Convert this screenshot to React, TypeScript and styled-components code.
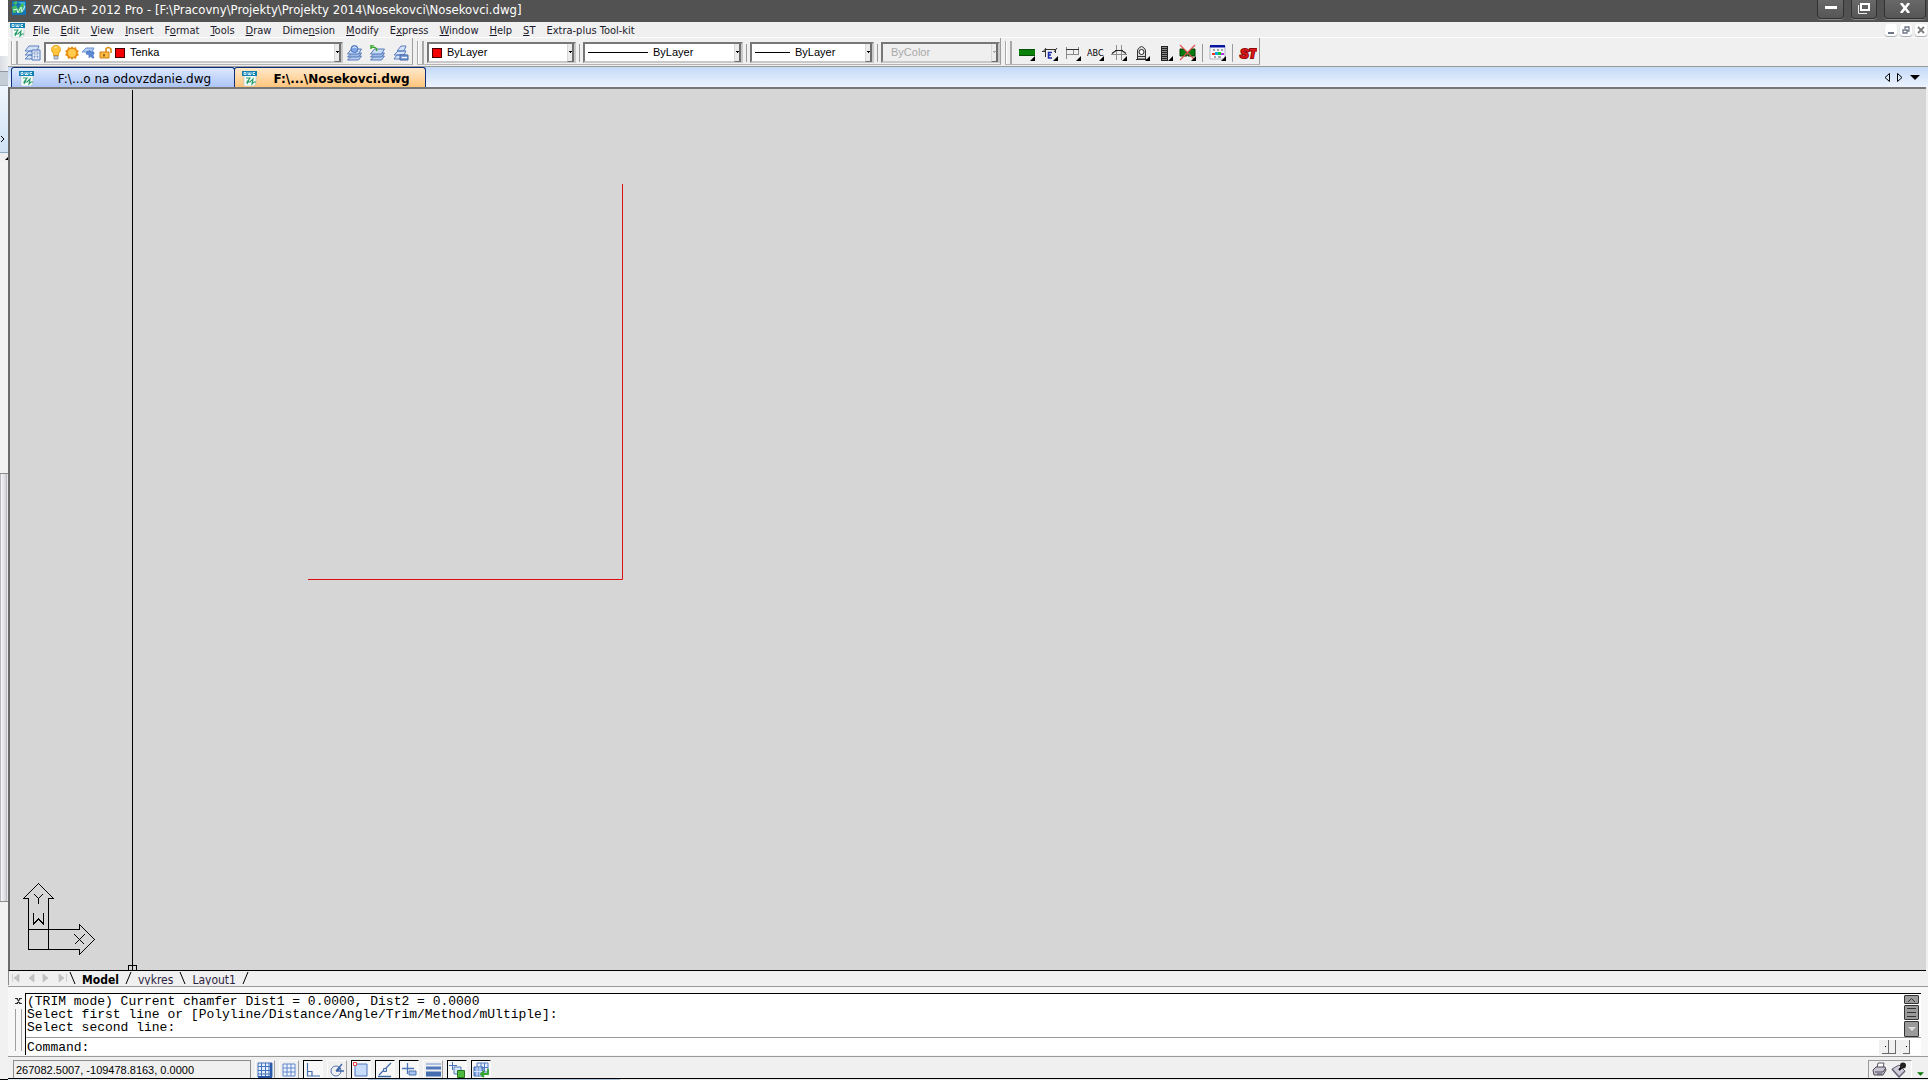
import React from "react";
import styled, { createGlobalStyle, css } from "styled-components";

const GlobalStyle = createGlobalStyle`
  * { box-sizing: border-box; }
  html, body { margin: 0; padding: 0; overflow: hidden; }
  body { background: #efefef; color: #000; font-family: "Liberation Sans", Arial, sans-serif; font-size: 11px; }
  button { font: inherit; color: inherit; padding: 0; margin: 0; border: 0; background: none; }
  svg { display: block; flex: none; }
`;

/* ---------- frame ---------- */

const Screen = styled.div`
  display: flex;
  height: 100vh;
`;

const Behind = styled.aside`
  display: flex;
  flex-direction: column;
  flex: none;
  width: 8px;
  background: #f0f0f0;
`;

const BehindPart = styled.div<{ $h?: number; $bg: string; $line?: string }>`
  display: flex;
  align-items: flex-end;
  ${(p) => (p.$h ? `height: ${p.$h}px; flex: none;` : "flex: 1;")}
  background: ${(p) => p.$bg};
  border-bottom: 1px solid ${(p) => p.$line || "transparent"};
`;

const AppWindow = styled.div`
  display: flex;
  flex-direction: column;
  flex: 1;
  min-width: 0;
`;

/* ---------- title ---------- */

const TitleBar = styled.header`
  display: flex;
  align-items: flex-start;
  flex: none;
  height: 22px;
  padding: 0 2px 0 2px;
  background: #525252;
  color: #fff;
`;

const Title = styled.h1`
  flex: 1;
  margin: 0 0 0 7px;
  font: 400 13px/19px "DejaVu Sans Condensed", "DejaVu Sans", sans-serif;
  font-stretch: condensed;
  white-space: pre;
`;

const WinButtons = styled.div`
  display: flex;
  gap: 7px;
`;

const WinButton = styled.button<{ $w: number }>`
  display: flex;
  justify-content: center;
  align-items: center;
  width: ${(p) => p.$w}px;
  height: 19px;
  padding-bottom: 2px;
  border: 1px solid #323232;
  border-top: 0;
  border-radius: 0 0 4px 4px;
  background: linear-gradient(#686868, #565656);
  box-shadow: 0 1px 0 #858585;
`;

/* ---------- menu ---------- */

const MenuBar = styled.nav`
  display: flex;
  align-items: center;
  flex: none;
  height: 16px;
  padding: 1px 1px 0 2px;
  border-bottom: 1px solid #fff;
  background: #f0f0f0;
`;

const Menus = styled.div`
  display: flex;
  flex: 1;
  gap: 11px;
  margin-left: 7px;
`;

const MenuButton = styled.button`
  height: 14px;
  font: 11px/15px "DejaVu Sans Condensed", "DejaVu Sans", sans-serif;
  font-stretch: condensed;
  color: #1c1a2c;
  white-space: pre;
`;

const DocButtons = styled.div`
  display: flex;
  gap: 3px;
`;

const DocButton = styled.button`
  display: flex;
  align-items: center;
  justify-content: center;
  width: 12px;
  height: 12px;
  border-radius: 3px;
  background: #fff;
  box-shadow: 0 1px 1px #a5a9b0;
`;

/* ---------- toolbar ---------- */

const Toolbars = styled.div`
  display: flex;
  flex: none;
  height: 29px;
  padding-left: 3px;
  border-bottom: 1px solid #9a9a9a;
  background: #f0f0f0;
`;

const Toolbar = styled.div`
  display: flex;
  align-items: center;
  height: 27px;
  margin-right: 4px;
  padding-top: 3px;
  border-right: 1px solid #9c9c9c;
  border-bottom: 1px solid #b4b4b4;
`;

const Grip = styled.span`
  width: 7px;
  height: 23px;
  margin-right: 3px;
  border-left: 1px solid #a8a8a8;
  border-right: 1px solid #a8a8a8;
  background: linear-gradient(90deg, #fff 1px, #f0f0f0 1px, #f0f0f0 4px, #a8a8a8 4px);
`;

const ToolButton = styled.button`
  display: flex;
  align-items: center;
  justify-content: center;
  width: 23px;
  height: 23px;
`;

const Divider = styled.span`
  width: 1px;
  height: 18px;
  margin: 0 3px;
  background: #9a9a9a;
`;

const ComboBox = styled.div<{ $w: number; $off?: boolean }>`
  display: flex;
  align-items: center;
  width: ${(p) => p.$w}px;
  height: 21px;
  padding: 0 0 0 3px;
  border: 2px solid;
  border-color: #777 #c9c9c9 #c9c9c9 #777;
  background: ${(p) => (p.$off ? "#efefef" : "#fff")};
`;

const ComboIcons = styled.span`
  display: flex;
  align-items: center;
  gap: 2px;
`;

const ComboSelect = styled.select`
  flex: 1;
  min-width: 0;
  height: 17px;
  padding: 0 0 0 5px;
  border: 0;
  background: transparent;
  color: #000;
  font: 11px/17px "Liberation Sans", Arial, sans-serif;
  appearance: none;
  &:disabled { color: #a9a9a9; opacity: 1; }
`;

const ComboArrow = styled.span<{ $off?: boolean }>`
  display: flex;
  align-items: center;
  justify-content: center;
  width: 7px;
  height: 18px;
  border-right: 2px solid #6e6e6e;
  border-bottom: 1px solid #6e6e6e;
  border-left: 1px solid #d8d8d8;
  background: #ececec;
  color: ${(p) => (p.$off ? "#a9a9a9" : "#000")};
`;

const Swatch = styled.span`
  width: 10px;
  height: 10px;
  border: 1px solid #400;
  background: #f40000;
`;

const LineSample = styled.span<{ $w: number }>`
  width: ${(p) => p.$w}px;
  height: 1px;
  background: #000;
`;

/* ---------- document tabs ---------- */

const TabStrip = styled.div`
  display: flex;
  flex: none;
  align-items: flex-end;
  height: 20px;
  padding: 0 8px 0 3px;
  background: linear-gradient(#c3daf8, #edf3fe);
`;

const DocTab = styled.button<{ $on?: boolean; $w: number }>`
  display: flex;
  align-items: center;
  gap: 6px;
  width: ${(p) => p.$w}px;
  height: 20px;
  padding: 2px 6px 0 7px;
  border: 1px solid #0d2f78;
  border-bottom: 0;
  border-radius: 3px 3px 0 0;
  font: 12px/18px "DejaVu Sans", sans-serif;
  background: linear-gradient(#dce8fd, #adc5f6);
  ${(p) =>
    p.$on &&
    css`
      margin-left: -1px;
      font-weight: 700;
      background: linear-gradient(#ffe9cb, #ffc57c);
    `}
`;

const TabText = styled.span`
  flex: 1;
  text-align: center;
  white-space: pre;
`;

const TabNav = styled.div`
  display: flex;
  align-items: center;
  gap: 7px;
  height: 20px;
  margin-left: auto;
`;

/* ---------- drawing area ---------- */

const Canvas = styled.main`
  position: relative;
  flex: 1;
  min-height: 0;
  margin-right: 2px;
  border-top: 2px solid #777;
  border-left: 2px solid #6a6a6a;
  border-bottom: 1px solid #000;
  background: #d6d6d6;
  overflow: hidden;
`;

const Geometry = styled.svg`
  position: absolute;
  inset: 0;
  width: 100%;
  height: 100%;
`;

const UcsIcon = styled.svg`
  position: absolute;
  left: 12px;
  bottom: 14px;
`;

const Crosshair = styled.div`
  position: absolute;
  left: 122px;
  top: 1px;
  bottom: 0;
  width: 1px;
  background: #000;
`;

const PickBox = styled.div`
  position: absolute;
  left: 118px;
  bottom: -1px;
  width: 9px;
  height: 6px;
  border: 1px solid #000;
`;

/* ---------- layout tabs ---------- */

const LayoutTabs = styled.div`
  display: flex;
  flex: none;
  align-items: flex-start;
  height: 14px;
  padding-left: 3px;
  border-left: 1px solid #8a8a8a;
  background: #f0f0f0;
  overflow: hidden;
`;

const LayoutNav = styled.div`
  display: flex;
  align-items: center;
  width: 57px;
  height: 14px;
`;

const LayoutTab = styled.button<{ $on?: boolean }>`
  height: 18px;
  padding: 0 6px;
  font: ${(p) => (p.$on ? 700 : 400)} 12px/18px "DejaVu Sans Condensed", "DejaVu Sans", sans-serif;
  font-stretch: condensed;
  color: ${(p) => (p.$on ? "#000" : "#2c2440")};
`;

/* ---------- command window ---------- */

const CommandDock = styled.section`
  display: flex;
  flex: none;
  height: 71px;
  margin-top: 1px;
  padding: 6px 7px 0 5px;
  border-top: 1px solid #9a9a9a;
  border-bottom: 1px solid #9a9a9a;
  background: #f7f7f7;
`;

const DockHandle = styled.div`
  display: flex;
  flex-direction: column;
  align-items: center;
  gap: 5px;
  width: 12px;
  padding: 5px 2px 0 0;
`;

const DockGrip = styled.span`
  width: 7px;
  height: 42px;
  border-left: 1px solid #a0a0a0;
  border-right: 1px solid #a0a0a0;
`;

const CommandBox = styled.div`
  display: flex;
  flex-direction: column;
  flex: 1;
  height: 62px;
  border-top: 1px solid #000;
  border-left: 1px solid #000;
  background: #fff;
  font: 13px/13px "Liberation Mono", "Courier New", monospace;
`;

const History = styled.div`
  display: flex;
  justify-content: space-between;
  height: 45px;
  padding: 1px 2px 0 1px;
  border-bottom: 1px solid #9a9a9a;
`;

const Log = styled.div`
  white-space: pre;
`;

const ScrollColumn = styled.div`
  display: flex;
  flex-direction: column;
  gap: 1px;
`;

const ScrollPiece = styled.button<{ $h: number }>`
  display: flex;
  align-items: center;
  justify-content: center;
  width: 15px;
  height: ${(p) => p.$h}px;
  border: 1px solid #333;
  border-radius: 1px;
  background: #9b9b9b;
`;

const Prompt = styled.div`
  display: flex;
  align-items: center;
  flex: 1;
  padding: 2px 11px 0 1px;
`;

const PromptInput = styled.input`
  flex: 1;
  height: 14px;
  padding: 0 0 0 4px;
  border: 0;
  outline: 0;
  background: transparent;
  font: inherit;
`;

const SideScroll = styled.div`
  display: flex;
  height: 15px;
  padding-left: 3px;
  background: #f0f0f0;
`;

const SideButton = styled.button`
  display: flex;
  align-items: center;
  justify-content: center;
  width: 7px;
  height: 14px;
  border-right: 1px solid #6a6a6a;
  border-bottom: 1px solid #6a6a6a;
`;

const SideTrack = styled.span`
  width: 7px;
`;

/* ---------- status bar ---------- */

const StatusBar = styled.footer`
  display: flex;
  flex: none;
  align-items: flex-start;
  height: 22px;
  padding: 3px 0 0 5px;
  border-bottom: 1px solid #000;
  background: #f0f0f0;
`;

const Coordinates = styled.output`
  width: 238px;
  height: 18px;
  margin-right: 4px;
  padding-left: 2px;
  border: 1px solid #8c8c8c;
  border-bottom: 0;
  font-size: 11px;
  line-height: 18px;
`;

const Toggles = styled.div`
  display: flex;
  gap: 4px;
`;

const Toggle = styled.button<{ $down?: boolean }>`
  display: flex;
  align-items: center;
  justify-content: center;
  width: 20px;
  height: 18px;
  border: 1px solid;
  border-bottom: 0;
  border-color: ${(p) => (p.$down ? "#000 #fafafa #000 #000" : "#fafafa #a0a0a0 #fafafa #fafafa")};
  background: ${(p) => (p.$down ? "#f8f8f8" : "#f0f0f0")};
`;

const Tray = styled.div`
  display: flex;
  align-items: center;
  gap: 4px;
  width: 44px;
  height: 18px;
  margin-left: auto;
  padding: 0 3px;
  border: 1px solid #999;
  border-right-color: #fff;
  border-bottom: 0;
`;

const TrayArrow = styled.button`
  align-self: flex-end;
  width: 16px;
  padding: 0 0 2px 5px;
`;

const Taskbar = styled.div`
  flex: none;
  height: 1px;
  background: linear-gradient(90deg, #dfe9f4 0 60px, #f4f4f4 60px 360px, #a9c2d8 360px 612px, #e8eaee 612px);
`;

/* ---------- icons ---------- */

const AppLogo = () => (
  <svg width="16" height="16" viewBox="0 0 16 16">
    <rect x="2" y="1" width="14" height="14" fill="#1674b4" />
    <path d="M8 2h7v9L12 5Z" fill="#3cb2e4" />
    <path d="M3 3l3-2 2 2-3 2ZM2 7l4-2 2 4 4-6 2 1-2 9h-3l-1-3-3 3H3Z" fill="#43ba63" />
    <path d="M3 10l4-1 1 4 3-6 1 5 3-6" fill="none" stroke="#d3f7ea" />
  </svg>
);

const DwgIcon = () => (
  <svg width="16" height="15" viewBox="0 0 16 15">
    <path d="M2 3h12v9l-2 3H2Z" fill="#f8fdfb" stroke="#a7bfc6" strokeWidth=".6" />
    <rect x="0" y="0" width="15" height="5" fill="#1280b4" />
    <path d="M2 1.500h2v2H2zM6 1v2.500h1.500V1.500M7.500 3.500H9V1M13 1.500h-2v2h2" fill="none" stroke="#e9faff" strokeWidth=".9" />
    <path d="M4 7h4l-3 4h3l3-3-1 5 2-2h2M5 13l2-4" fill="none" stroke="#2f9e6d" strokeWidth="1.200" />
  </svg>
);

const Sheets = () => (
  <g stroke="#4a6eae" strokeWidth=".9">
    <path d="M1 15l4-4h10l-3 4Z" fill="#b9d0f3" />
    <path d="M1 12l4-4h10l-3 4Z" fill="#9dbcec" />
    <path d="M1 9l4-5h10l-3 5Z" fill="#c8dbf8" />
  </g>
);

const LayerManagerIcon = () => (
  <svg width="17" height="16" viewBox="0 0 17 16">
    <path d="M1 6l4-5h10l-2 5ZM1 10l4-4h8l-2 4ZM1 14l4-4h8l-2 4Z" fill="#d3e1f7" stroke="#5c80bf" />
    <path d="M8 5h8v10H8Z" fill="#e3ebfa" stroke="#5376b5" />
    <path d="M10 7h4v2h-4zM10 11h1v1h-1zM13 11h1v1h-1zM10 13h1M13 13h1" fill="#fff" stroke="#6485bd" strokeWidth=".7" />
  </svg>
);

const LayerCurrentIcon = () => (
  <svg width="17" height="16" viewBox="0 0 16 16">
    <Sheets />
    <circle cx="8" cy="4" r="3.500" fill="#7fa5e4" stroke="#4f78bc" />
    <path d="M6 3q2-2 4 0" stroke="#e6f0ff" fill="none" />
  </svg>
);

const LayerPreviousIcon = () => (
  <svg width="17" height="16" viewBox="0 0 16 16">
    <Sheets />
    <path d="M7 6Q8 2 2 2M4.500 0H1.500v4" fill="none" stroke="#35a92e" strokeWidth="1.500" />
  </svg>
);

const LayerStatesIcon = () => (
  <svg width="16" height="16" viewBox="0 0 16 16">
    <path d="M1 14l3-4h9l-2 4ZM1 10l4-4h8l-2 4ZM4 6l4-5h5l-2 5Z" fill="#d5e3fa" stroke="#5a7fbe" />
    <path d="M7 10h8v5H7z" fill="#7fa2dc" stroke="#41659f" />
    <path d="M9 12.500h5" stroke="#fff" />
  </svg>
);

const BulbIcon = () => (
  <svg width="14" height="15" viewBox="0 0 14 15">
    <path d="M7 0.500c5 0 5.500 5 2.500 8v2h-5v-2C1.500 5.500 2 .5 7 .5Z" fill="#ffc63c" stroke="#e59a12" />
    <path d="M5 3q1-1 3-1" stroke="#fff4c4" fill="none" />
    <path d="M5 11h4v3H5z" fill="#c9d2e0" stroke="#6d7890" strokeWidth=".7" />
  </svg>
);

const SunIcon = () => (
  <svg width="14" height="14" viewBox="0 0 14 14">
    <path d="M7 0l1.500 2L11 1l.5 2.500L14 5l-1.500 2L14 9l-2.500 1.500L11 13l-2.500-1L7 14l-1.500-2L3 13l-.5-2.500L0 9l1.500-2L0 5l2.500-1.500L3 1l2.500 1Z" fill="#e98d13" />
    <circle cx="7" cy="7" r="4" fill="#ffcc4d" />
  </svg>
);

const FreezeIcon = () => (
  <svg width="14" height="14" viewBox="0 0 14 14">
    <path d="M5 2h8l-2 4H1Z" fill="#b4cdf5" stroke="#6a8fd2" />
    <path d="M6 5l1 1 1.500-2L10 6h3v2l-1 1 1 3h-2l-1-2-2 2V9L5 8Z" fill="#5c86d6" stroke="#4c74b9" strokeWidth=".6" />
  </svg>
);

const LockIcon = () => (
  <svg width="14" height="14" viewBox="0 0 14 14">
    <path d="M7 6V3q2-3 5 0v4" fill="none" stroke="#d98a12" strokeWidth="1.600" />
    <path d="M1 6h9v6H1z" fill="#ffbd45" stroke="#cf7f10" />
    <path d="M5 8v2.500" stroke="#7b4a08" strokeWidth="1.500" />
  </svg>
);

const Corner = () => <path d="M17 12v5h-5Z" fill="#000" />;

const steelIcons: Record<string, React.ReactNode> = {
  "Green beam": (
    <>
      <path d="M1 5h16v7H1z" fill="#0a820a" />
      <path d="M1 5.500h16M1 11.500h16" stroke="#075007" />
    </>
  ),
  "Edit reinforcement": (
    <>
      <path d="M5 5.500h10M4.500 5v8M1 7.500h3M14.500 5v4M2 8l3-4M13 8l3-4" stroke="#333" fill="none" />
      <path d="M11 8.500H7.500V14H11M7.500 11H10" stroke="#1a2cae" fill="none" strokeWidth="1.500" />
    </>
  ),
  Dimensions: (
    <>
      <path d="M2.500 3v12M14.500 3v8M9.500 5v6M2 10.500h13" stroke="#8a8a8a" fill="none" />
      <path d="M2 5.500h13" stroke="#333" />
    </>
  ),
  Grid: (
    <>
      <path d="M6.500 1v15M11.500 1v15M1 10.500h16" stroke="#8c8c8c" />
      <path d="M2 9.500l4-3h6l4 3M5 6.500h8" stroke="#222" fill="none" strokeWidth="1.200" />
    </>
  ),
  Section: (
    <>
      <path d="M4.500 15V6q4-7 8 0v9Z" fill="#ddd" stroke="#333" />
      <circle cx="8.500" cy="8" r="2.500" fill="#fff" stroke="#222" />
      <path d="M4 12.500h9M3 15.500h11" stroke="#333" />
    </>
  ),
  Column: (
    <>
      <path d="M5 2h7v15H5z" fill="#8b8b8b" />
      <path d="M5 2.500h7M5 4.500h7M5 6.500h7M5 8.500h7M5 10.500h7M5 12.500h7M5 14.500h7M5 16.500h7M5.500 2v15M11.500 2v15" stroke="#222" />
    </>
  ),
  "Delete beam": (
    <>
      <path d="M1 5h4l3 3v4H1zM16 5h-4l-3 3v4h7z" fill="#067c10" stroke="#063c06" />
      <path d="M1 1l15 15M16 1L1 16" stroke="#e05050" strokeWidth="1.200" />
    </>
  ),
  "Color table": (
    <>
      <path d="M1 2h15v13H1z" fill="#f8f8ff" stroke="#b5b5c5" />
      <path d="M1 1h15v2.500H1z" fill="#0a169e" />
      <path d="M4 6h2M8 6h2M12 6h2M5 13h2M9 13h3" stroke="#555" />
      <path d="M3 9h3v2H3z" fill="#f0341c" />
      <path d="M6 8h3v3H6z" fill="#14a7e8" />
      <path d="M9 8h3v3H9z" fill="#10c82c" />
      <path d="M12 9h3v2h-3z" fill="#b034e0" />
    </>
  ),
};

const SteelIcon = ({ name }: { name: string }) => (
  <svg width="18" height="18" viewBox="0 0 18 18">
    {steelIcons[name]}
    <Corner />
  </svg>
);

const AbcIcon = () => (
  <svg width="18" height="18" viewBox="0 0 18 18">
    <text x="0" y="12" fontFamily="DejaVu Sans Condensed, DejaVu Sans, sans-serif" fontSize="9" fontStretch="condensed" fill="#000">ABC</text>
    <Corner />
  </svg>
);

const StLogo = () => (
  <svg width="18" height="16" viewBox="0 0 18 16">
    <text
      x="1"
      y="13"
      fontFamily="Liberation Sans, sans-serif"
      fontSize="13"
      fontWeight="700"
      fontStyle="italic"
      fill="#e01818"
      stroke="#8c0a0a"
      strokeWidth="2"
      paintOrder="stroke"
    >
      ST
    </text>
  </svg>
);

const blue = "#4472bd";
const statusIcons: Record<string, React.ReactNode> = {
  Snap: (
    <>
      <path d="M1 1h14v14H1z" fill="#e4efff" stroke={blue} />
      <path d="M4.500 1v13M8.500 1v13M12 1v13M1 4.500h13M1 8.500h13M1 12h13" stroke={blue} />
      <path d="M14 1v14H1" stroke="#2c59a8" strokeWidth="2" fill="none" />
    </>
  ),
  Grid: <path d="M2 2h12v12H2zM6 2v12M10 2v12M2 6h12M2 10h12" fill="#eff5ff" stroke="#6086c8" />,
  Ortho: <path d="M2.500 1v13H15M3 9.500h4V14" fill="none" stroke="#466fae" strokeWidth="1.200" />,
  Polar: (
    <>
      <circle cx="7" cy="9" r="5" fill="none" stroke="#5378b3" />
      <path d="M7 9h8M7 9l6-7M7 9l5-3" stroke="#3c64a8" strokeWidth="1.300" />
    </>
  ),
  "Object snap": (
    <>
      <path d="M2 2h12v12H2z" fill="#c7dbfb" stroke="#5076be" />
      <path d="M.5 .5h3v3h-3z" fill="#fff" stroke="#e34040" />
    </>
  ),
  "Object tracking": (
    <>
      <path d="M1 14.500h13M2 13L14 1" stroke="#446ca9" strokeWidth="1.300" />
      <path d="M6.500 6.500h3v3h-3z" fill="#cfe0fa" stroke="#446ca9" />
    </>
  ),
  "Dynamic input": (
    <>
      <path d="M6.500 1v11M1 6.500h12" stroke="#4b74b8" strokeWidth="1.300" />
      <path d="M8 9h7v4H8z" fill="#a9c4ee" stroke="#4d74b2" />
    </>
  ),
  Lineweight: (
    <>
      <path d="M1 2h15" stroke="#6c91cb" />
      <path d="M1 6h15" stroke="#4f77b9" strokeWidth="3" />
      <path d="M1 12h15" stroke="#456eb1" strokeWidth="5" />
    </>
  ),
  "Cycle select": (
    <>
      <path d="M3.500 0v8M0 3.500h8" stroke="#4b74b8" />
      <path d="M5 5h7v7H5z" fill="#d8e7fb" stroke="#527abb" />
      <path d="M8.500 8.500h7v7h-7z" fill="#4cb83e" stroke="#23751d" />
    </>
  ),
  "Model space": (
    <>
      <path d="M4 1h11v9H4zM8 1v9M11.500 1v9M4 5.500h11" fill="#e3edff" stroke="#537bbf" />
      <path d="M1 5h9v9H1z" fill="#7ea4e2" stroke="#3c65a8" />
      <path d="M4 5v9M7 5v9M1 9.500h9" stroke="#dce8ff" />
      <path d="M15 7v5H9M11 9l-3 3 3 3" fill="none" stroke="#34a62c" strokeWidth="1.800" />
    </>
  ),
};

const DownTriangle = ({ size, color = "currentColor" }: { size: number; color?: string }) => (
  <svg width={size} height={Math.ceil(size / 2)} viewBox="0 0 10 5">
    <path d="M0 0h10L5 5Z" fill={color} />
  </svg>
);

/* ---------- parts ---------- */

type ComboProps = {
  id: string;
  label: string;
  value: string;
  width: number;
  disabled?: boolean;
  children?: React.ReactNode;
};

const Combo = ({ id, label, value, width, disabled, children }: ComboProps) => (
  <ComboBox $w={width} $off={disabled}>
    <ComboIcons>{children}</ComboIcons>
    <ComboSelect id={id} aria-label={label} disabled={disabled} defaultValue={value}>
      <option>{value}</option>
    </ComboSelect>
    <ComboArrow $off={disabled}>
      <svg width="3" height="2" viewBox="0 0 3 2">
        <path d="M0 0h3v1H2v1H1V1H0Z" fill="currentColor" />
      </svg>
    </ComboArrow>
  </ComboBox>
);

/* label and position of the underlined access key */
const menus: [string, number][] = [
  ["File", 0],
  ["Edit", 0],
  ["View", 0],
  ["Insert", 0],
  ["Format", 1],
  ["Tools", 0],
  ["Draw", 0],
  ["Dimension", 4],
  ["Modify", 0],
  ["Express", 1],
  ["Window", 0],
  ["Help", 0],
  ["ST", 0],
  ["Extra-plus Tool-kit", -1],
];

const toggles: [string, boolean][] = [
  ["Snap", false],
  ["Grid", false],
  ["Ortho", true],
  ["Polar", false],
  ["Object snap", true],
  ["Object tracking", true],
  ["Dynamic input", true],
  ["Lineweight", false],
  ["Cycle select", true],
  ["Model space", true],
];

const MenuLabel = ({ text, mark }: { text: string; mark: number }) =>
  mark < 0 ? (
    <>{text}</>
  ) : (
    <>
      {text.slice(0, mark)}
      <u>{text[mark]}</u>
      {text.slice(mark + 1)}
    </>
  );

const Slash = ({ back }: { back?: boolean }) => (
  <svg width="7" height="14" viewBox="0 0 7 14">
    <path d={back ? "M1 1L6 13" : "M6 1L1 13"} stroke="#000" fill="none" />
  </svg>
);

export default function App() {
  return (
    <>
      <GlobalStyle />
      <Screen>
        <Behind aria-hidden="true">
          <BehindPart $h={56} $bg="#fff" />
          <BehindPart $h={16} $bg="linear-gradient(90deg,#d9dde3,#eceef1)" $line="#8e969f" />
          <BehindPart $h={14} $bg="#c4ccd5" $line="#a5b4c4" />
          <BehindPart $h={67} $bg="linear-gradient(#f0f6fd,#cfe1f5)" $line="#8fa8c4">
            <svg width="6" height="17" viewBox="0 0 6 17">
              <path d="M1 1l3 3-3 3" fill="none" stroke="#000" />
            </svg>
          </BehindPart>
          <BehindPart $h={9} $bg="#efefef">
            <svg width="8" height="4" viewBox="0 0 8 4">
              <path d="M5 3l3-3v3Z" fill="#000" />
            </svg>
          </BehindPart>
          <BehindPart $h={312} $bg="#f1f1f1" $line="#8c8c8c" />
          <BehindPart $h={428} $bg="linear-gradient(90deg,#b9b9c0 1px,#f7f7f9 1px,#d3d3da 6px,#a3a3aa 7px,#e8e8e8 7px)" $line="#8c8c8c" />
          <BehindPart $bg="#f1f1f1" $line="#000" />
        </Behind>

        <AppWindow>
          <TitleBar>
            <AppLogo />
            <Title>ZWCAD+ 2012 Pro - [F:\Pracovny\Projekty\Projekty 2014\Nosekovci\Nosekovci.dwg]</Title>
            <WinButtons>
              <WinButton $w={27} aria-label="Minimize">
                <svg width="12" height="4"><path d="M0 0h12v3H0z" fill="#fff" /></svg>
              </WinButton>
              <WinButton $w={26} aria-label="Restore">
                <svg width="12" height="12" viewBox="0 0 12 12">
                  <path d="M.5 3v8.500H9" fill="none" stroke="#eee" />
                  <path d="M3 2h8v6H3z" fill="none" stroke="#fff" strokeWidth="2" />
                </svg>
              </WinButton>
              <WinButton $w={42} aria-label="Close">
                <svg width="12" height="10" viewBox="0 0 12 10">
                  <path d="M2 0l8 10M10 0L2 10" stroke="#fff" strokeWidth="2.600" />
                </svg>
              </WinButton>
            </WinButtons>
          </TitleBar>

          <MenuBar>
            <DwgIcon />
            <Menus>
              {menus.map(([text, mark]) => (
                <MenuButton key={text}>
                  <MenuLabel text={text} mark={mark} />
                </MenuButton>
              ))}
            </Menus>
            <DocButtons>
              <DocButton aria-label="Minimize drawing">
                <svg width="8" height="8"><path d="M1 6h6v2H1z" fill="#6d7785" /></svg>
              </DocButton>
              <DocButton aria-label="Restore drawing">
                <svg width="8" height="8" viewBox="0 0 8 8">
                  <path d="M3 3V1h4v4H5M1 4h4v3H1z" fill="none" stroke="#6d7785" strokeWidth="1.300" />
                </svg>
              </DocButton>
              <DocButton aria-label="Close drawing">
                <svg width="8" height="8" viewBox="0 0 8 8">
                  <path d="M1 1l6 6M7 1L1 7" stroke="#7b7b7b" strokeWidth="1.800" />
                </svg>
              </DocButton>
            </DocButtons>
          </MenuBar>

          <Toolbars>
            <Toolbar>
              <Grip />
              <ToolButton aria-label="Layer manager"><LayerManagerIcon /></ToolButton>
              <Combo id="layer" label="Layer" value="Tenka" width={299}>
                <BulbIcon />
                <SunIcon />
                <FreezeIcon />
                <span />
                <LockIcon />
                <Swatch />
              </Combo>
              <ToolButton aria-label="Make layer current"><LayerCurrentIcon /></ToolButton>
              <ToolButton aria-label="Previous layer"><LayerPreviousIcon /></ToolButton>
              <ToolButton aria-label="Layer states"><LayerStatesIcon /></ToolButton>
            </Toolbar>
            <Toolbar>
              <Grip />
              <Combo id="color" label="Color" value="ByLayer" width={149}><Swatch /></Combo>
              <Divider />
              <Combo id="linetype" label="Linetype" value="ByLayer" width={160}><LineSample $w={60} /></Combo>
              <Divider />
              <Combo id="lineweight" label="Lineweight" value="ByLayer" width={124}><LineSample $w={35} /></Combo>
              <Divider />
              <Combo id="plotstyle" label="Plot style" value="ByColor" width={119} disabled />
            </Toolbar>
            <Toolbar>
              <Grip />
              {["Green beam", "Edit reinforcement", "Dimensions"].map((n) => (
                <ToolButton key={n} aria-label={n}><SteelIcon name={n} /></ToolButton>
              ))}
              <ToolButton aria-label="Text"><AbcIcon /></ToolButton>
              {["Grid", "Section", "Column", "Delete beam"].map((n) => (
                <ToolButton key={n} aria-label={n}><SteelIcon name={n} /></ToolButton>
              ))}
              <Divider />
              <ToolButton aria-label="Color table"><SteelIcon name="Color table" /></ToolButton>
              <Divider />
              <ToolButton aria-label="Steel tools"><StLogo /></ToolButton>
            </Toolbar>
          </Toolbars>

          <TabStrip>
            <DocTab $w={224}><DwgIcon /><TabText>F:\...o na odovzdanie.dwg</TabText></DocTab>
            <DocTab $w={192} $on><DwgIcon /><TabText>F:\...\Nosekovci.dwg</TabText></DocTab>
            <TabNav>
              <button aria-label="Previous tab">
                <svg width="6" height="9" viewBox="0 0 6 9"><path d="M5.500 .5v8L1 4.500Z" fill="none" stroke="#000" /></svg>
              </button>
              <button aria-label="Next tab">
                <svg width="6" height="9" viewBox="0 0 6 9"><path d="M.5 .5v8L5 4.500Z" fill="none" stroke="#000" /></svg>
              </button>
              <button aria-label="Tab list"><DownTriangle size={10} /></button>
            </TabNav>
          </TabStrip>

          <Canvas>
            <Geometry>
              <path d="M612.500 95v395.500H298" fill="none" stroke="#dc1010" />
            </Geometry>
            <UcsIcon width="74" height="74" viewBox="0 0 74 74">
              <g fill="none" stroke="#000" shapeRendering="crispEdges">
                <path d="M6.500 67.500v-51H1.500L16.500 1.500 31.500 16.500H26.500v51M6.500 47.500h51v-5l15 15-15 15v-5h-51" />
                <path d="M12.500 12.500l4 4 4-4M16.500 16.500v5M11.500 31v11l5-5 5 5V31M52.500 52.500l10 10M62.500 52.500l-10 10" />
              </g>
            </UcsIcon>
            <Crosshair />
            <PickBox />
          </Canvas>

          <LayoutTabs>
            <LayoutNav>
              <svg width="56" height="10" viewBox="0 0 56 10">
                <path d="M.5 1v8M7 1v8L2 5ZM22 1v8l-5-4ZM31 1v8l5-4ZM47 1v8l5-4ZM54.500 1v8" fill="#c3c3c3" stroke="#b8b8b8" strokeWidth=".6" />
              </svg>
            </LayoutNav>
            <Slash back />
            <LayoutTab $on>Model</LayoutTab>
            <Slash />
            <LayoutTab>vykres</LayoutTab>
            <Slash back />
            <LayoutTab>Layout1</LayoutTab>
            <Slash />
          </LayoutTabs>

          <CommandDock>
            <DockHandle>
              <button aria-label="Close command window">
                <svg width="7" height="6" viewBox="0 0 7 6">
                  <path d="M0 .5h3M4 .5h3M0 5.500h3M4 5.500h3M1.500 0l4 6M5.500 0l-4 6" stroke="#333" strokeWidth="1.200" />
                </svg>
              </button>
              <DockGrip />
            </DockHandle>
            <CommandBox>
              <History>
                <Log>
                  <div>(TRIM mode) Current chamfer Dist1 = 0.0000, Dist2 = 0.0000</div>
                  <div>Select first line or [Polyline/Distance/Angle/Trim/Method/mUltiple]:</div>
                  <div>Select second line:</div>
                </Log>
                <ScrollColumn>
                  <ScrollPiece $h={9} aria-label="Scroll up">
                    <svg width="7" height="4"><path d="M0 4l3.500-3.500L7 4" fill="none" stroke="#333" /></svg>
                  </ScrollPiece>
                  <ScrollPiece $h={15} aria-label="Scroll thumb">
                    <svg width="9" height="9"><path d="M0 .5h9M0 4.500h9M0 8.500h9" stroke="#333" /></svg>
                  </ScrollPiece>
                  <ScrollPiece $h={16} aria-label="Scroll down"><DownTriangle size={8} color="#ddd" /></ScrollPiece>
                </ScrollColumn>
              </History>
              <Prompt>
                <label htmlFor="command">Command:</label>
                <PromptInput id="command" />
                <SideScroll>
                  <SideButton aria-label="Scroll left"><svg width="1" height="1"><path d="M0 0h1v1H0z" /></svg></SideButton>
                  <SideButton aria-label="Scroll position" />
                  <SideTrack />
                  <SideButton aria-label="Scroll right"><svg width="1" height="1"><path d="M0 0h1v1H0z" /></svg></SideButton>
                </SideScroll>
              </Prompt>
            </CommandBox>
          </CommandDock>

          <StatusBar>
            <Coordinates>267082.5007, -109478.8163, 0.0000</Coordinates>
            <Toggles>
              {toggles.map(([name, down]) => (
                <Toggle key={name} $down={down} aria-label={name} aria-pressed={down}>
                  <svg width="16" height="16" viewBox="0 0 16 16">{statusIcons[name]}</svg>
                </Toggle>
              ))}
            </Toggles>
            <Tray>
              <svg width="15" height="15" viewBox="0 0 15 15">
                <path d="M5 6l1-5h6l-1 6" fill="#fff" stroke="#5a5566" />
                <path d="M1 8l3-3h9l1 3-3 5H2Z" fill="#c8c4d2" stroke="#4a4656" />
                <path d="M3 10h8l2-3M5 12h5" stroke="#4a4656" fill="none" />
              </svg>
              <svg width="17" height="16" viewBox="0 0 17 16">
                <path d="M1 7l7-4 6 6-6 6Z" fill="#cfcad8" stroke="#625d72" />
                <path d="M1 7l7 8 6-6" fill="none" stroke="#6b667a" strokeWidth="1.500" />
                <path d="M8 8l3-3" stroke="#000" strokeWidth="2" />
                <circle cx="12" cy="3.500" r="3" fill="#222" />
              </svg>
            </Tray>
            <TrayArrow aria-label="Status bar menu"><DownTriangle size={7} color="#087808" /></TrayArrow>
          </StatusBar>
          <Taskbar />
        </AppWindow>
      </Screen>
    </>
  );
}
